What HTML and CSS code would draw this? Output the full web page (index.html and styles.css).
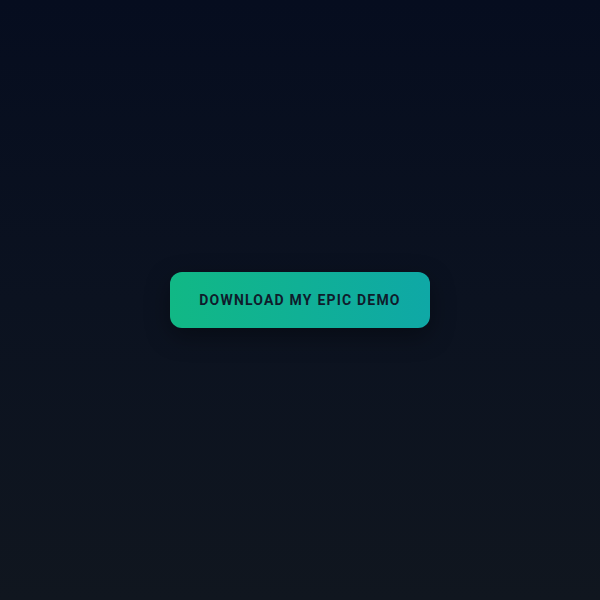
FILE: index.html
```html
<!DOCTYPE html>
<html lang="en">
<head>
<meta charset="utf-8">
<title>Demo</title>
<link rel="stylesheet" href="styles.css">
</head>
<body>
<main class="stage">
  <button class="cta" type="button">DOWNLOAD MY EPIC DEMO</button>
</main>
</body>
</html>
```
FILE: styles.css
```css
html, body {
  margin: 0;
  padding: 0;
  height: 100%;
}
body {
  background: linear-gradient(180deg, #060d1f 0%, #0b1220 50%, #10161f 100%);
  font-family: Roboto, "Liberation Sans", sans-serif;
}
.stage {
  height: 600px;
  display: flex;
  align-items: center;
  justify-content: center;
}
.cta {
  width: 260px;
  height: 56px;
  border: none;
  border-radius: 12px;
  background: linear-gradient(90deg, #11b885 0%, #0fa8a6 100%);
  color: #0f1c2c;
  font-family: Roboto, "Liberation Sans", sans-serif;
  font-weight: 700;
  font-size: 14px;
  letter-spacing: 1.2px;
  box-shadow: 0 8px 24px rgba(0, 0, 0, 0.35);
  cursor: pointer;
}
```
